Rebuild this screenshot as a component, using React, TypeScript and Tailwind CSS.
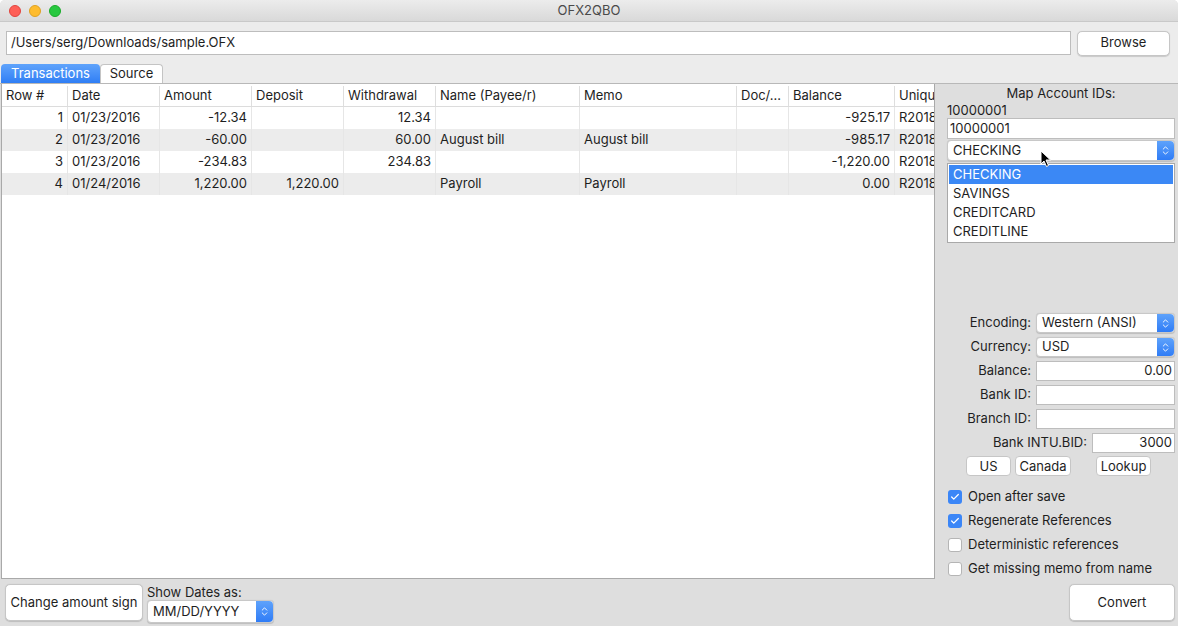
import { ChevronsUpDown, Check } from "lucide-react";

const cols = [
  { name: "Row #", w: 65, right: true },
  { name: "Date", w: 92, right: false },
  { name: "Amount", w: 92, right: true },
  { name: "Deposit", w: 92, right: true },
  { name: "Withdrawal", w: 92, right: true },
  { name: "Name (Payee/r)", w: 144, right: false },
  { name: "Memo", w: 157, right: false },
  { name: "Doc/...", w: 52, right: false },
  { name: "Balance", w: 106, right: true },
  { name: "Uniqu", w: 40, right: false },
];

const rows = [
  ["1", "01/23/2016", "-12.34", "", "12.34", "", "", "", "-925.17", "R2018"],
  ["2", "01/23/2016", "-60.00", "", "60.00", "August bill", "August bill", "", "-985.17", "R2018"],
  ["3", "01/23/2016", "-234.83", "", "234.83", "", "", "", "-1,220.00", "R2018"],
  ["4", "01/24/2016", "1,220.00", "1,220.00", "", "Payroll", "Payroll", "", "0.00", "R2018"],
];

function Stepper() {
  return (
    <div className="flex h-full w-[17px] items-center justify-center rounded-r-[4px] bg-gradient-to-b from-[#5ea2fb] to-[#2f7cf6] text-white">
      <ChevronsUpDown size={11} strokeWidth={2} />
    </div>
  );
}

function Select({ value, className }: { value: string; className: string }) {
  return (
    <div className={`flex items-center rounded-[4px] border border-[#c8c8c8] bg-white shadow-[0_0.5px_1px_rgba(0,0,0,0.15)] ${className}`}>
      <span className="flex-1 truncate pl-[5px]">{value}</span>
      <Stepper />
    </div>
  );
}

function Field({ label, value, labelW }: { label: string; value?: string; labelW: string }) {
  return (
    <div className="flex h-[24px] items-center">
      <span className={`${labelW} pr-[5px] text-right`}>{label}</span>
      <div className="flex h-[20px] flex-1 items-center justify-end border border-[#bdbdbd] bg-white pr-[2px]">{value}</div>
    </div>
  );
}

function Checkbox({ checked, label }: { checked: boolean; label: string }) {
  return (
    <div className="flex h-[24px] items-center gap-[6px]">
      {checked ? (
        <div className="flex h-[14px] w-[14px] items-center justify-center rounded-[3px] bg-[#3b86f7] text-white">
          <Check size={10} strokeWidth={3} />
        </div>
      ) : (
        <div className="h-[14px] w-[14px] rounded-[3px] border border-[#b5b5b5] bg-white" />
      )}
      <span>{label}</span>
    </div>
  );
}

export default function App() {
  return (
    <div
      className="flex h-[626px] w-[1178px] flex-col overflow-hidden rounded-t-[5px] bg-[#dedede] text-[13px] text-[#1e1e1e]"
      style={{ fontFamily: "Inter, 'Liberation Sans', sans-serif" }}
    >
      {/* title bar */}
      <div className="relative flex h-[22px] items-center justify-center border-b border-[#c9c9c9] bg-gradient-to-b from-[#ececec] to-[#d9d9d9] text-[#4a4a4a]">
        <div className="absolute left-[9px] top-[5px] flex gap-[8px]">
          <div className="h-[12px] w-[12px] rounded-full border border-[#e0443e] bg-[#fe5f57]" />
          <div className="h-[12px] w-[12px] rounded-full border border-[#dea123] bg-[#febc2e]" />
          <div className="h-[12px] w-[12px] rounded-full border border-[#1aab29] bg-[#28c840]" />
        </div>
        <span>OFX2QBO</span>
      </div>

      {/* path row */}
      <div className="flex h-[42px] items-center gap-[6px] bg-[#ececec] pl-[6px] pr-[8px]">
        <div className="flex h-[24px] flex-1 items-center border border-[#bdbdbd] bg-white pl-[4px]">/Users/serg/Downloads/sample.OFX</div>
        <button className="h-[25px] w-[93px] rounded-[5px] border border-[#c6c6c6] bg-white shadow-[0_0.5px_1px_rgba(0,0,0,0.15)]">Browse</button>
      </div>

      {/* tabs */}
      <div className="flex h-[19px] items-end bg-[#ececec] pl-[1px]">
        <div className="flex h-[19px] w-[99px] items-center justify-center rounded-t-[4px] bg-gradient-to-b from-[#5fa3fb] to-[#2f7ef5] text-white">Transactions</div>
        <div className="flex h-[19px] w-[63px] items-center justify-center rounded-t-[4px] border border-b-0 border-[#c4c4c4] bg-white">Source</div>
        <div className="flex-1" />
      </div>

      {/* body */}
      <div className="flex flex-1 border-t border-[#b8b8b8]">
        <div className="flex flex-1 flex-col">
          <div className="mx-[1px] flex flex-1 flex-col overflow-hidden border border-t-0 border-[#a9a9a9] bg-white">
            <div className="flex h-[23px] items-center border-b border-[#dcdcdc] pt-[2px]">
              {cols.map((c, i) => (
                <div
                  key={c.name}
                  className={`flex h-full shrink-0 items-center overflow-hidden whitespace-nowrap pl-[4px] ${i > 0 ? "border-l border-[#dedede]" : ""}`}
                  style={{ width: c.w }}
                >
                  {c.name}
                </div>
              ))}
            </div>
            {rows.map((r, ri) => (
              <div key={ri} className={`flex h-[22px] items-center ${ri % 2 === 1 ? "bg-[#ececec]" : "bg-white"}`}>
                {r.map((v, ci) => (
                  <div
                    key={ci}
                    className={`flex h-full shrink-0 items-center overflow-hidden whitespace-nowrap px-[4px] ${cols[ci].right ? "justify-end" : ""} ${ci > 0 ? "border-l border-[#e6e6e6]" : ""}`}
                    style={{ width: cols[ci].w }}
                  >
                    {v}
                  </div>
                ))}
              </div>
            ))}
          </div>
          {/* bottom */}
          <div className="flex h-[47px] items-start gap-[4px] pl-[5px] pt-[5px]">
            <button className="h-[37px] w-[138px] rounded-[5px] border border-[#c6c6c6] bg-white shadow-[0_0.5px_1px_rgba(0,0,0,0.15)]">Change amount sign</button>
            <div className="flex flex-col">
              <span className="leading-[16px]">Show Dates as:</span>
              <Select value="MM/DD/YYYY" className="h-[23px] w-[127px]" />
            </div>
          </div>
        </div>

        {/* right panel */}
        <div className="relative flex w-[243px] flex-col pl-[11px] pr-[3px]">
          <div className="h-[18px] text-center leading-[18px]">Map Account IDs:</div>
          <div className="h-[16px] leading-[16px]">10000001</div>
          <div className="flex h-[21px] items-center border border-[#bdbdbd] bg-white pl-[2px]">10000001</div>
          <Select value="CHECKING" className="mt-[1px] h-[21px]" />
          <div className="mt-[2px] flex flex-col border border-[#a9a9a9] bg-white p-[1px]">
            <div className="h-[19px] bg-[#3b88f5] pl-[4px] leading-[19px] text-white">CHECKING</div>
            <div className="h-[19px] pl-[4px] leading-[19px]">SAVINGS</div>
            <div className="h-[19px] pl-[4px] leading-[19px]">CREDITCARD</div>
            <div className="h-[19px] pl-[4px] leading-[19px]">CREDITLINE</div>
          </div>
          {/* mouse pointer */}
          <svg className="absolute left-[104px] top-[66px]" width="12" height="18" viewBox="0 0 12 18">
            <path d="M1 1 L1 14 L4 11 L6.5 16.5 L8.5 15.5 L6 10 L10.5 10 Z" fill="#000" stroke="#fff" strokeWidth="1" />
          </svg>

          <div className="flex-1" />

          <div className="flex flex-col">
            <div className="flex h-[24px] items-center">
              <span className="w-[89px] pr-[5px] text-right">Encoding:</span>
              <Select value="Western (ANSI)" className="h-[20px] flex-1" />
            </div>
            <div className="flex h-[24px] items-center">
              <span className="w-[89px] pr-[5px] text-right">Currency:</span>
              <Select value="USD" className="h-[20px] flex-1" />
            </div>
            <Field label="Balance:" value="0.00" labelW="w-[89px]" />
            <Field label="Bank ID:" labelW="w-[89px]" />
            <Field label="Branch ID:" labelW="w-[89px]" />
            <Field label="Bank INTU.BID:" value="3000" labelW="w-[145px]" />
            <div className="flex h-[22px] items-center pl-[19px]">
              <button className="h-[20px] w-[45px] rounded-[4px] border border-[#c6c6c6] bg-white">US</button>
              <button className="ml-[4px] h-[20px] w-[56px] rounded-[4px] border border-[#c6c6c6] bg-white">Canada</button>
              <button className="ml-[25px] h-[20px] w-[55px] rounded-[4px] border border-[#c6c6c6] bg-white">Lookup</button>
            </div>
          </div>

          <div className="mt-[8px] flex flex-col pl-[1px]">
            <Checkbox checked label="Open after save" />
            <Checkbox checked label="Regenerate References" />
            <Checkbox checked={false} label="Deterministic references" />
            <Checkbox checked={false} label="Get missing memo from name" />
          </div>

          <div className="flex justify-end pb-[5px] pt-[3px]">
            <button className="h-[37px] w-[106px] rounded-[5px] border border-[#c6c6c6] bg-white shadow-[0_0.5px_1px_rgba(0,0,0,0.15)]">Convert</button>
          </div>
        </div>
      </div>
    </div>
  );
}
